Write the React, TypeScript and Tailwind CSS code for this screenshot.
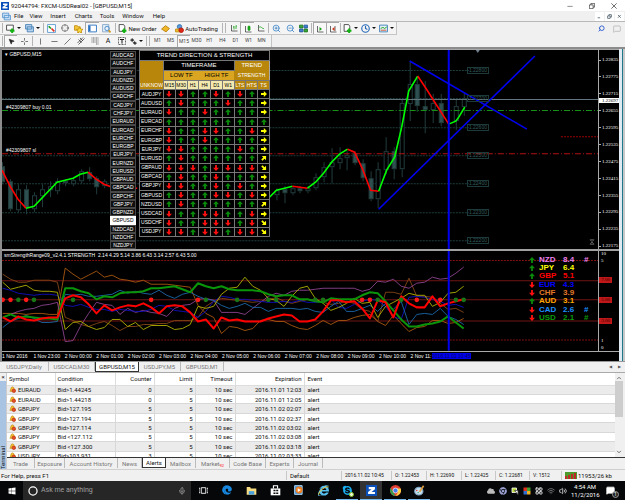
import type { ReactNode } from "react";
import clsx from "clsx";
import { FaChrome, FaCloud, FaEdge, FaInternetExplorer, FaSkype, FaWindows } from "react-icons/fa";
import {
  Clock, Crosshair, LayoutGrid, MessageSquare, Mic, MousePointer2, Search, Volume2, Wifi, ZoomIn, ZoomOut,
} from "lucide-react";

const PAIRS = [
  "AUDCAD", "AUDCHF", "AUDJPY", "AUDNZD", "AUDUSD", "CADCHF", "CADJPY", "CHFJPY", "EURAUD", "EURCAD", "EURCHF", "EURGBP",
  "EURJPY", "EURNZD", "EURUSD", "GBPAUD", "GBPCAD", "GBPCHF", "GBPJPY", "GBPNZD", "GBPUSD", "NZDCAD", "NZDCHF", "NZDJPY",
];

// u = up, d = down, last letter: r = flat, x = rising, y = falling
const TRENDS: [string, string][] = [
  ["AUDJPY", "dduududur"],
  ["AUDUSD", "uduuuduur"],
  ["EURAUD", "duuduuuur"],
  ["EURCAD", "uuuuuuuuu"],
  ["EURCHF", "duudduudr"],
  ["EURGBP", "duuduuuur"],
  ["EURJPY", "dduuuudur"],
  ["EURUSD", "uduuuuuux"],
  ["GBPAUD", "dddudddd" + "y"],
  ["GBPCAD", "uduuduuur"],
  ["GBPJPY", "dduududur"],
  ["GBPUSD", "uduuddudr"],
  ["NZDUSD", "uduuuuuux"],
  ["USDCAD", "duudduudr"],
  ["USDCHF", "duuddd" + "udy"],
  ["USDJPY", "ddudduddy"],
];

const PRICES = [
  "1.22835", "1.22775", "1.22715", "1.22655", "1.22595", "1.22535", "1.22475", "1.22415", "1.22355", "1.22295", "1.22235", "1.22175",
];

const LEVELS: [string, number][] = [
  ["1.22800", 20], ["1.22700", 48], ["1.22600", 77], ["1.22500", 105], ["1.22400", 133], ["1.22300", 162], ["1.22200", 190],
];

// x, wick top, body top, body bottom, wick bottom, filled
const CANDLES: [number, number, number, number, number, number][] = [
  [0, 112, 116, 132, 134, 1], [8, 129, 131, 159, 161, 1], [16, 134, 139, 160, 162, 0], [24, 135, 139, 158, 164, 1],
  [32, 142, 145, 159, 162, 0], [40, 134, 139, 146, 157, 0], [48, 131, 136, 140, 147, 0], [55, 128, 131, 141, 144, 0],
  [63, 129, 131, 133, 136, 1], [71, 127, 130, 134, 136, 0], [79, 119, 121, 131, 133, 0], [87, 117, 122, 129, 131, 1],
  [94, 126, 128, 137, 144, 1], [102, 129, 131, 136, 138, 0], [274, 138, 140, 145, 150, 0], [282, 136, 139, 143, 153, 1],
  [290, 136, 138, 143, 145, 0], [297, 136, 138, 141, 143, 1], [305, 136, 138, 141, 143, 0], [313, 123, 127, 138, 140, 0],
  [321, 112, 117, 127, 132, 0], [329, 98, 112, 117, 133, 0], [337, 97, 108, 113, 119, 0], [344, 101, 105, 108, 120, 0],
  [352, 101, 103, 113, 115, 1], [360, 109, 113, 128, 131, 1], [368, 121, 128, 149, 151, 1], [375, 112, 119, 149, 158, 0],
  [383, 87, 101, 120, 124, 0], [391, 97, 101, 119, 129, 1], [399, 50, 53, 119, 127, 0], [407, 11, 34, 54, 71, 0],
  [414, 26, 34, 56, 62, 1], [422, 31, 56, 60, 83, 1], [430, 44, 53, 60, 73, 0], [438, 44, 53, 73, 76, 1],
  [453, 49, 56, 71, 80, 0], [461, 42, 48, 57, 66, 0],
];

const AVERAGE: [string, string][] = [
  ["#f00", "2,120 10,136 18,149 26,158"],
  ["#0f0", "26,158 34,156 57,132 65,130 73,128 80,124 88,122"],
  ["#f00", "88,122 96,129 104,134 112,137 137,138"],
  ["#0f0", "268,148 276,140 284,138 292,136"],
  ["#f00", "292,136 307,138"],
  ["#0f0", "307,138 315,132 323,123 331,112 339,104 347,99"],
  ["#f00", "347,99 354,102 362,119 370,140 378,141"],
  ["#0f0", "378,141 386,120 394,107 401,77 408,41 417,26"],
  ["#f00", "417,26 425,38 448,74"],
  ["#0f0", "448,74 455,71 458,67 464,57"],
];

const STRENGTH: { color: string; width: number; points: number[] }[] = [
  { color: "#a8580e", width: 0.9, points: [62, 62, 62, 63, 62, 62, 63, 63, 17, 23, 28, 24, 20, 26, 24, 28, 29, 31, 29, 33, 33, 33, 34, 35, 36, 54, 62, 66, 82, 75, 76, 79, 77, 69, 68, 70, 70, 74, 77, 78, 74, 69, 73, 69, 69, 66, 64, 63, 70, 74, 64, 72, 80, 76, 75, 69, 69, 72, 71, 67] },
  { color: "#854616", width: 0.9, points: [23, 28, 31, 31, 29, 29, 29, 31, 66, 69, 73, 75, 72, 70, 74, 79, 75, 75, 73, 73, 72, 72, 69, 69, 69, 66, 55, 50, 47, 48, 49, 50, 51, 50, 49, 46, 50, 52, 50, 48, 49, 51, 53, 52, 50, 52, 58, 60, 70, 41, 41, 43, 27, 45, 45, 46, 52, 58, 57, 61] },
  { color: "#8c428e", width: 0.9, points: [66, 63, 60, 58, 57, 54, 53, 51, 90, 89, 74, 62, 51, 53, 54, 63, 57, 61, 59, 61, 62, 65, 57, 54, 53, 48, 47, 49, 61, 61, 61, 63, 57, 51, 45, 42, 44, 40, 39, 39, 38, 37, 37, 37, 37, 37, 40, 38, 30, 31, 28, 35, 37, 32, 31, 26, 28, 27, 22, 16] },
  { color: "#1010c0", width: 0.9, points: [37, 39, 42, 43, 44, 43, 43, 44, 54, 55, 53, 56, 58, 58, 60, 58, 59, 60, 60, 58, 54, 55, 59, 60, 61, 66, 60, 50, 45, 46, 48, 48, 49, 50, 51, 51, 50, 51, 49, 51, 51, 50, 48, 56, 57, 53, 50, 48, 49, 55, 65, 68, 46, 45, 46, 48, 50, 54, 53, 56] },
  { color: "#1b68a8", width: 0.9, points: [76, 70, 67, 64, 67, 71, 71, 70, 43, 44, 43, 45, 45, 44, 43, 39, 42, 40, 42, 43, 39, 44, 47, 43, 41, 45, 48, 49, 54, 57, 55, 52, 56, 56, 60, 57, 57, 57, 58, 57, 60, 61, 55, 50, 60, 60, 57, 54, 60, 52, 58, 50, 73, 63, 62, 63, 57, 65, 68, 73] },
  { color: "#b0b000", width: 0.9, points: [31, 38, 36, 34, 39, 40, 40, 41, 78, 71, 70, 75, 78, 76, 68, 68, 75, 71, 78, 74, 74, 74, 78, 77, 73, 55, 57, 55, 43, 37, 36, 26, 35, 39, 47, 49, 55, 45, 37, 35, 47, 52, 59, 56, 52, 47, 52, 51, 66, 55, 51, 47, 42, 44, 44, 55, 51, 42, 41, 35] },
  { color: "#0a940a", width: 2, points: [66, 63, 66, 65, 66, 67, 67, 68, 37, 37, 40, 42, 48, 45, 46, 42, 41, 41, 40, 37, 37, 36, 35, 38, 41, 32, 35, 37, 35, 38, 39, 39, 39, 40, 43, 45, 44, 44, 48, 48, 50, 51, 47, 48, 48, 48, 44, 41, 42, 50, 59, 68, 75, 75, 73, 72, 70, 65, 71, 77] },
  { color: "#f00", width: 2, points: [66, 70, 65, 68, 69, 67, 66, 66, 47, 44, 46, 53, 62, 54, 59, 56, 54, 55, 52, 56, 62, 55, 54, 55, 61, 70, 68, 77, 66, 69, 68, 70, 70, 70, 67, 65, 63, 64, 70, 70, 68, 60, 49, 49, 51, 50, 57, 67, 49, 51, 66, 45, 52, 56, 56, 45, 55, 52, 50, 48] },
];

const RED_DOTS = [0, 1, 3, 19, 25, 46, 47, 53, 56];
const GREEN_DOTS = [2, 4, 9, 26, 30, 34, 35, 40, 41, 48, 51, 58, 59];

const RANKING = [
  { name: "NZD", value: "8.4", up: true, mark: "#", color: "text-[#ee82ee]" },
  { name: "JPY", value: "6.4", up: true, mark: "", color: "text-[#ffff00]" },
  { name: "GBP", value: "5.1", up: true, mark: "", color: "text-[#ff0000]" },
  { name: "EUR", value: "4.3", up: false, mark: "", color: "text-[#0000ff]" },
  { name: "CHF", value: "3.9", up: false, mark: "", color: "text-[#e07828]" },
  { name: "AUD", value: "3.1", up: true, mark: "", color: "text-[#ffa500]" },
  { name: "CAD", value: "2.6", up: false, mark: "#", color: "text-[#1e90ff]" },
  { name: "USD", value: "2.1", up: false, mark: "#", color: "text-[#0a9a0a]" },
];

const TIMES = [
  "1 Nov 2016", "1 Nov 23:00", "2 Nov 00:00", "2 Nov 01:00", "2 Nov 02:00", "2 Nov 03:00", "2 Nov 04:00",
  "2 Nov 05:00", "2 Nov 06:00", "2 Nov 07:00", "2 Nov 08:00", "2 Nov 09:00", "2 Nov 10:00", "2 Nov 11:",
];

const ALERTS = [
  ["EURAUD", "Bid>1.44245", "0", "2016.11.01 12:03"],
  ["EURAUD", "Bid>1.44218", "0", "2016.11.01 12:05"],
  ["GBPJPY", "Bid>127.195", "5", "2016.11.02 02:07"],
  ["GBPJPY", "Bid>127.194", "5", "2016.11.02 02:37"],
  ["GBPJPY", "Bid>127.114", "5", "2016.11.02 03:02"],
  ["GBPJPY", "Bid <127.112", "5", "2016.11.02 03:08"],
  ["GBPJPY", "Bid <127.300", "5", "2016.11.02 03:18"],
  ["USDJPY", "Bid>103.931", "3", "2016.11.02 03:33"],
];

function Arrow({ dir }: { dir: string }) {
  const turn: Record<string, string> = { u: "0", d: "180", r: "90", x: "45", y: "135" };
  const fill = dir === "u" ? "#0a8a0a" : dir === "d" ? "#ff1010" : "#ffff00";
  return (
    <svg viewBox="0 0 8 8" className="mx-auto block size-[6px]">
      <path d="M4 0 8 4.2H5.2V8H2.8V4.2H0z" fill={fill} transform={`rotate(${turn[dir]} 4 4)`} />
    </svg>
  );
}

function Caret() {
  return (
    <svg viewBox="0 0 4 2" className="h-[2px] w-[4px] shrink-0">
      <path d="M0 0h4L2 2z" fill="#111" />
    </svg>
  );
}

function Draw({ children, className = "size-[9px]" }: { children: ReactNode; className?: string }) {
  return (
    <svg viewBox="0 0 16 16" fill="none" stroke="#444" strokeWidth="1.6" className={clsx("shrink-0", className)}>
      {children}
    </svg>
  );
}

function Tool({ label, className, children, pressed }: { label: string; className: string; children: ReactNode; pressed?: boolean }) {
  return (
    <button
      aria-label={label}
      className={clsx(
        "flex h-[12px] shrink-0 items-center justify-center whitespace-nowrap",
        pressed && "border-l border-t border-[#a8a8a8] bg-[#f8f8f8]",
        className,
      )}
    >
      {children}
    </button>
  );
}

function Sep() {
  return <span className="mx-[1px] h-[10px] w-px shrink-0 bg-[#b4b4b4]" />;
}

function Logo({ className }: { className: string }) {
  return (
    <svg viewBox="0 0 16 16" className={clsx("shrink-0", className)}>
      <path d="M0 0h16v16H0z" fill="#0a50b8" />
      <path d="M4 3h9v3L8 10h5v3H3v-3l5-4H4z" fill="#fff" />
    </svg>
  );
}

function Plus() {
  return <path d="M11 8v8M7 12h8" stroke="#12b012" strokeWidth="3.5" />;
}

function TitleBar() {
  return (
    <header className="flex h-[11px] items-center bg-white pl-[1px] pr-[8px]">
      <Logo className="size-[8px]" />
      <h1 className="ml-[2px] flex-1 whitespace-nowrap text-[6px] leading-[10px]">92044794: FXCM-USDReal02 - [GBPUSD,M15]</h1>
      <div className="flex gap-[16px]">
        <button aria-label="Minimize"><Draw className="size-[6px]"><path d="M1 9h14" /></Draw></button>
        <button aria-label="Restore"><Draw className="size-[6px]"><path d="M1 5h10v10H1zM5 5V1h10v10h-4" stroke="#111" /></Draw></button>
        <button aria-label="Close"><Draw className="size-[6px]"><path d="m1 1 14 14M15 1 1 15" stroke="#111" /></Draw></button>
      </div>
    </header>
  );
}

function MenuBar() {
  return (
    <nav className="flex h-[11px] items-center border-b border-[#b8b8b8] pl-[2px] text-[6px] leading-[10px]">
      <Draw><path d="M1 2h11v8H1zM4 6h11v8H4z" fill="#cfe4f8" stroke="#5a98d0" /></Draw>
      <div className="ml-[3px] flex flex-1">
        <button className="w-[15px] text-left">File</button>
        <button className="w-[14px]">View</button>
        <button className="w-[30px]">Insert</button>
        <button className="w-[21px]">Charts</button>
        <button className="w-[26px]">Tools</button>
        <button className="w-[26px]">Window</button>
        <button className="w-[26px]">Help</button>
      </div>
      <div className="flex gap-[1px] pr-[1px]">
        {["M2 12h8", "M2 6h8v8H2zM6 6V2h8v8h-4", "m3 3 9 9M12 3l-9 9"].map((d) => (
          <button key={d} aria-label="Chart window" className="flex h-[9px] w-[9px] items-center justify-center bg-white">
            <Draw className="size-[5px]"><path d={d} stroke="#456" strokeWidth="2.4" /></Draw>
          </button>
        ))}
      </div>
    </nav>
  );
}

function MainToolbar() {
  return (
    <div className="flex h-[13px] items-center">
      <div className="flex h-[13px] items-center border-b border-r border-[#c4c4c4] bg-[#f4f4f4] pl-[1px] text-[6px]">
        <Sep />
        <Tool label="New chart" className="w-[19px] gap-[2px]">
          <Draw><path d="M1 2h12v9H1z" fill="#fff" /><Plus /></Draw><Caret />
        </Tool>
        <Tool label="Profiles" className="w-[19px] gap-[2px]">
          <Draw><path d="M1 1h11v8H1zM4 5h11v9H4z" fill="#b8d4ee" stroke="#4b84b8" /></Draw><Caret />
        </Tool>
        <Sep />
        <Tool label="Market watch" className="w-[13px]">
          <Draw><path d="M1 1h14v14H1z" fill="#fff" stroke="#5a98d0" /><path d="m3 4 4 4" stroke="#18a018" strokeWidth="3" /><path d="m8 8 5 5" stroke="#e03020" strokeWidth="3" /></Draw>
        </Tool>
        <Tool label="Data window" className="w-[14px]"><Crosshair className="size-[8px] text-[#555]" /></Tool>
        <Tool label="Navigator" className="w-[13px]">
          <Draw><path d="M1 3h5l1 2h4v6H1z" fill="#f4c83c" stroke="#c89010" /><path d="m10 6 2 3 4 .5-3 2.5.5 4-3.500-2-3.500 2 .5-4L4 9.500 8.500 9z" fill="#fbe040" stroke="#c89010" /></Draw>
        </Tool>
        <Tool label="Terminal" className="w-[14px]" pressed>
          <Draw><path d="M1 2h14v12H1z" fill="#fff" stroke="#2870c0" /><path d="M3 3v10" stroke="#2870c0" strokeWidth="3" /></Draw>
        </Tool>
        <Tool label="Strategy tester" className="w-[15px]">
          <Draw><path d="M1 1h11v13H1z" fill="#e4eef8" stroke="#88a8c8" /><circle cx="9" cy="8" r="4" stroke="#4888c8" /><path d="m12 11 3 4" stroke="#d09820" strokeWidth="3" /></Draw>
        </Tool>
        <Sep />
        <Tool label="New order" className="w-[41px] gap-[1px]">
          <Draw><path d="M2 1h8l2 3v9H2z" fill="#fff" /><Plus /></Draw>New Order
        </Tool>
        <Tool label="MetaEditor" className="w-[14px]">
          <Draw><path d="m1 9 7-6 7 5-6 6z" fill="#f0b828" stroke="#b88010" /></Draw>
        </Tool>
        <Tool label="AutoTrading" className="w-[49px] gap-[1px]">
          <Draw><circle cx="8" cy="5" r="4" fill="#5898d8" stroke="#3878b8" /><path d="M1 9h12v5H1z" fill="#f0c030" stroke="#c08c10" /><circle cx="11" cy="11" r="4" fill="#e02818" stroke="#b01810" /></Draw>AutoTrading
        </Tool>
        <Sep />
        <Sep />
        <Tool label="Bar chart" className="w-[13px]">
          <Draw className="size-[8px]"><path d="M3 2v12h12" /><path d="M8 4v7M8 6H6M12 3v7M12 4h2" stroke="#18a018" /></Draw>
        </Tool>
        <Tool label="Candlesticks" className="w-[14px]" pressed>
          <Draw className="size-[8px]"><path d="M3 2v12h12" /><path d="M8 3h4v7H8zM10 1v11" fill="#18b018" stroke="#18a018" /></Draw>
        </Tool>
        <Tool label="Line chart" className="w-[13px]">
          <Draw className="size-[8px]"><path d="M3 2v12h12" /><path d="M3 8c5-6 6 2 11 1" stroke="#18a018" /></Draw>
        </Tool>
        <Sep />
        <Tool label="Zoom in" className="w-[13px]">
          <ZoomIn className="size-[9px] text-[#2f7cc4]" />
        </Tool>
        <Tool label="Zoom out" className="w-[14px]">
          <ZoomOut className="size-[9px] text-[#2f7cc4]" />
        </Tool>
        <Tool label="Tile windows" className="w-[13px]">
          <Draw><path d="M1 2h6v5H1zM9 9h6v5H9z" fill="#38a838" stroke="#207820" /><path d="M9 2h6v5H9zM1 9h6v5H1z" fill="#4080d0" stroke="#2858a0" /></Draw>
        </Tool>
        <Sep />
        <Tool label="Auto scroll" className="w-[13px]" pressed>
          <Draw className="size-[8px]"><path d="M3 2v12h12" /><path d="m7 4 5 4-5 4z" fill="#18a018" stroke="none" /></Draw>
        </Tool>
        <Tool label="Chart shift" className="w-[13px]" pressed>
          <Draw className="size-[8px]"><path d="M3 2v12h12M12 2v10" /><path d="m11 4-5 4 5 4z" fill="#d03818" stroke="none" /></Draw>
        </Tool>
        <Sep />
        <Tool label="Indicators" className="w-[17px] gap-[2px]">
          <Draw><path d="M2 1h8l2 3v9H2z" fill="#fff" /><Plus /></Draw><Caret />
        </Tool>
        <Tool label="Periods" className="w-[18px] gap-[2px]"><Clock strokeWidth={3} className="size-[9px] text-[#2468b8]" /><Caret /></Tool>
        <Tool label="Templates" className="w-[19px] gap-[2px]">
          <Draw><path d="M1 2h14v12H1z" fill="#e4f0fa" stroke="#4080b8" /><path d="m3 8 4-2 3 2 4-3" stroke="#18a018" /><path d="M3 11h10" stroke="#d05030" /></Draw><Caret />
        </Tool>
      </div>
      <div className="flex flex-1 justify-end gap-[8px] pr-[4px]">
        <button aria-label="Search"><Search strokeWidth={3} className="size-[7px] -scale-x-100 text-[#2858d0]" /></button>
        <button aria-label="Chat"><MessageSquare className="size-[8px] text-[#aaa]" /></button>
      </div>
    </div>
  );
}

function LineToolbar() {
  const periods = ["M1", "M5", "M15", "M30", "H1", "H4", "D1", "W1", "MN"];
  return (
    <div className="flex h-[12px] items-center">
      <div className="flex h-[12px] items-center border-r border-[#c4c4c4] bg-[#f4f4f4] pl-[1px]">
        <Sep />
        <Tool label="Cursor" className="w-[13px]" pressed><MousePointer2 className="size-[7px] fill-[#222] text-[#222]" /></Tool>
        <Tool label="Crosshair" className="w-[14px]"><Draw className="size-[7px]"><path d="M8 0v6M8 10v6M0 8h6M10 8h6" /></Draw></Tool>
        <Sep />
        <Tool label="Vertical line" className="w-[13px]"><Draw className="size-[7px]"><path d="M8 1v14" /></Draw></Tool>
        <Tool label="Horizontal line" className="w-[14px]"><Draw className="size-[7px]"><path d="M1 8h14" /></Draw></Tool>
        <Tool label="Trendline" className="w-[13px]"><Draw className="size-[7px]"><path d="M1 15 15 1" /></Draw></Tool>
        <Tool label="Channel" className="w-[14px]"><Draw className="size-[8px]"><path d="M1 12 12 1M3 15 15 3M3 5l6 6M6 2l6 6" /></Draw></Tool>
        <Tool label="Fibonacci" className="w-[13px]"><Draw className="size-[8px]"><path d="M1 2h14M1 6h14M1 10h14M10 14h5" strokeDasharray="2 1" /></Draw></Tool>
        <Tool label="Text" className="w-[14px] text-[7px]">A</Tool>
        <Tool label="Text label" className="w-[13px]"><Draw className="size-[8px]"><path d="M1 1h14v14H1z" strokeDasharray="2 1" /><path d="M4 5h8M8 5v8" stroke="#111" strokeWidth="2" /></Draw></Tool>
        <Tool label="Arrows" className="w-[17px] gap-[2px]"><Draw className="size-[7px]"><path d="m1 5 4-4 4 4-4 3zM7 11l4-3 4 4-4 3z" fill="#333" /></Draw><Caret /></Tool>
        <Sep />
        <Sep />
        {periods.map((p) => (
          <Tool key={p} label={p} className="w-[13px] text-[5px] text-[#444]" pressed={p === "M15"}>{p}</Tool>
        ))}
        <span className="w-[3px]" />
      </div>
    </div>
  );
}

function TrendTable() {
  const cell = "border border-[#777] p-0";
  return (
    <table className="h-[187px] w-[131px] table-fixed border-collapse border border-[#aaa] bg-black text-center text-[6px] leading-[7px] text-white">
      <colgroup>
        <col className="w-[24px]" />
      </colgroup>
      <thead>
        <tr className="h-[10px]"><th colSpan={10} className={clsx(cell, "whitespace-nowrap font-normal")}>TREND DIRECTION &amp; STRENGTH</th></tr>
        <tr className="h-[10px]">
          <th rowSpan={3} className="overflow-hidden border border-[#777] bg-[#b8860b] p-0 align-bottom text-[5px] font-normal">UNKNOW</th>
          <th colSpan={6} className={clsx(cell, "font-normal")}>TIMEFRAME</th>
          <th colSpan={3} className="bg-[#b8860b] p-0 font-normal">TREND</th>
        </tr>
        <tr className="h-[10px] text-black">
          <th colSpan={3} className="bg-[#daa520] p-0 font-normal">LOW TF</th>
          <th colSpan={3} className="bg-[#daa520] p-0 font-normal">HIGH TF</th>
          <th colSpan={3} className="bg-[#b8860b] p-0 text-[5px] font-normal text-white">STRENGTH</th>
        </tr>
        <tr className="h-[9px] text-[5px]">
          {["M15", "M30", "H1", "H4", "D1", "W1"].map((h) => (
            <th key={h} className={clsx(cell, "bg-[#f3e9ae] font-normal text-black")}>{h}</th>
          ))}
          {["LTS", "HTS", "TS"].map((h) => (
            <th key={h} className={clsx(cell, "bg-[#b8860b] font-normal")}>{h}</th>
          ))}
        </tr>
      </thead>
      <tbody>
        {TRENDS.map(([pair, dirs]) => (
          <tr key={pair} className="h-[9px]">
            <th scope="row" className={clsx(cell, "text-[5px] font-normal")}>{pair}</th>
            {dirs.split("").map((d, i) => (
              <td key={i} className={cell}><Arrow dir={d} /></td>
            ))}
          </tr>
        ))}
      </tbody>
    </table>
  );
}

function PriceChart() {
  return (
    <div className="flex min-h-[199px] flex-[2]">
      <div className="relative flex-1 overflow-hidden border-r border-[#aaa]">
        <svg viewBox="2 0 595 199" preserveAspectRatio="none" className="absolute inset-0 h-full w-full" fill="none">
          {LEVELS.map(([label, y]) => (
            <path key={label} d={`M2 ${y + 0.5}H468`} stroke="#1d3c3c" strokeDasharray="2 1" />
          ))}
          {CANDLES.map(([x, high, top, bottom, low, filled]) => (
            <g key={x} stroke="#223c3c">
              <path d={`M${x + 2.5} ${high}V${top}M${x + 2.5} ${bottom}V${low}`} />
              <rect x={x + 0.5} y={top + 0.5} width="4" height={bottom - top - 1} fill={filled ? "#2f5050" : "#000"} />
            </g>
          ))}
          <path d="M2 49.5H597" stroke="#64747c" />
          <path d="M2 60.5H597" stroke="#189018" strokeDasharray="6 2 1 2" />
          <path d="M2 103.5H597" stroke="#b01010" strokeDasharray="6 2 1 2" />
          <path d="M560 86.5H597" stroke="#900" strokeDasharray="2 1" />
          {AVERAGE.map(([color, points]) => (
            <polyline key={points} points={points} stroke={color} strokeWidth="1.6" />
          ))}
          <g stroke="#0000f0" strokeWidth="1.6">
            <path d="M409 11 526 79M378 159 534 6" />
            <path d="M448 0V199" strokeWidth="2" />
          </g>
          <path d="M475 0h4l-2 3z" fill="#708090" />
        </svg>
        {LEVELS.map(([label, y]) => (
          <span
            key={label}
            style={{ top: `${((y - 3) / 199) * 100}%` }}
            className="absolute left-[78%] border border-[#1d3a3a] px-[1px] text-[5px] leading-[5px] text-[#345c5c]"
          >
            {label}
          </span>
        ))}
        <p className="absolute left-[3px] top-[1px] text-[5px] leading-[6px]">▾ GBPUSD,M15</p>
        <p className="absolute left-[4px] top-[54px] text-[5px] leading-[6px]">#42309807 buy 0.01</p>
        <p className="absolute left-[4px] top-[97px] text-[5px] leading-[6px]">#42309807 sl</p>
        <div className="absolute inset-y-0 left-[108px] flex w-[26px] flex-col pt-[1px]">
          {PAIRS.map((pair) => (
            <button
              key={pair}
              className={clsx(
                "min-h-0 flex-1 border text-[5px] leading-[6px]",
                pair === "GBPUSD" ? "border-white bg-white text-black" : "border-[#484848] bg-[#101010]",
              )}
            >
              {pair}
            </button>
          ))}
        </div>
        <div className="absolute left-[137px] top-0"><TrendTable /></div>
        <Draw className="absolute bottom-[4px] right-[3px] size-[6px]"><path d="M3 2h10L8 7zM3 14h10L8 8z" stroke="#999" /></Draw>
      </div>
      <div className="relative flex w-[20px] flex-col justify-between pt-[7px] font-['Liberation_Serif',serif] text-[5px] leading-[6px]">
        {PRICES.map((p) => (
          <span key={p} className="flex items-center gap-[1px]"><i className="h-px w-[2px] bg-[#aaa]" />{p}</span>
        ))}
        <span className="absolute left-0 top-[24%] w-full bg-white pl-[3px] leading-[5px] text-black">1.22697</span>
      </div>
    </div>
  );
}

function StrengthChart() {
  const x = (i: number) => 2.7 + i * 7.8;
  const marks = [["7.00", "26%"], ["5.00", "46%"], ["3.00", "67%"]];
  return (
    <div className="flex min-h-[99px] flex-1 border-b border-[#aaa]">
      <div className="relative flex-1 overflow-hidden border-r border-[#aaa]">
        <svg viewBox="2 0 595 99" preserveAspectRatio="none" className="absolute inset-0 h-full w-full" fill="none">
          <path d="M2 9.500H597M2 88.500H597" stroke="#801010" strokeDasharray="2 1" />
          <path d="M2 29.500H597M2 48.500H597M2 69.500H597" stroke="#701414" />
          {STRENGTH.map((s) => (
            <polyline
              key={s.color}
              points={s.points.map((y, i) => `${x(i)},${y}`).join(" ")}
              stroke={s.color}
              strokeWidth={s.width}
              strokeLinejoin="round"
            />
          ))}
          {RED_DOTS.map((i) => <circle key={i} cx={x(i)} cy="48.500" r="2.300" fill="#ff1818" />)}
          {GREEN_DOTS.map((i) => <circle key={i} cx={x(i)} cy="48.500" r="2.300" fill="#187818" />)}
          <path d="M448 0V99" stroke="#0000f0" strokeWidth="2" />
        </svg>
        <p className="absolute left-[2px] top-[1px] whitespace-pre text-[5px] leading-[6px]">
          smStrengthRange09_v2.4.1 STRENGTH  2.14 4.29 5.14 3.86 6.43 3.14 2.57 6.43 5.00
        </p>
        <ul className="absolute right-[6px] top-[4px] grid h-[67px] w-[63px] grid-rows-8 text-[8px] font-bold leading-[8px]">
          {RANKING.map((r) => (
            <li key={r.name} className={clsx("flex items-center", r.color)}>
              <span className="w-[6px]"><Arrow dir={r.up ? "u" : "d"} /></span>
              <span className="ml-[4px] w-[24px]">{r.name}</span>
              <span className="w-[21px]">{r.value}</span>
              <span>{r.mark}</span>
            </li>
          ))}
        </ul>
      </div>
      <div className="relative w-[20px] font-['Liberation_Serif',serif] text-[5px] leading-[6px]">
        <span className="absolute left-[2px] top-0">10</span>
        <span className="absolute left-[2px] top-[7%]">5</span>
        {marks.map(([label, top]) => (
          <span key={label} style={{ top }} className="absolute left-0 w-[13px] bg-[#c01818] text-center text-[#300]">{label}</span>
        ))}
        <span className="absolute bottom-[7%] left-[2px]">1</span>
        <span className="absolute bottom-0 left-[2px]">0</span>
      </div>
    </div>
  );
}

function TimeAxis() {
  return (
    <div className="flex h-[9px] pt-[1px]">
      <div className="relative grid flex-1 grid-cols-19 text-[5px] leading-[6px]">
        {TIMES.map((t) => (
          <span key={t} className="whitespace-nowrap">{t}</span>
        ))}
        <span className="absolute left-[72%] w-[39px] whitespace-nowrap bg-[#0000f0] text-center text-[#000060]">2016.11.02 10:45</span>
      </div>
      <div className="w-[20px]" />
    </div>
  );
}

function ChartTabs() {
  const tabs = [
    ["USDJPY,Daily", "w-[49px]"], ["USDCAD,M30", "w-[46px]"], ["GBPUSD,M15", "w-[44px]"], ["USDJPY,M5", "w-[42px]"], ["GBPUSD,M1", "w-[43px]"],
  ];
  return (
    <div className="flex h-[11px] items-start border-t border-[#999] text-[6px] leading-[9px]">
      {tabs.map(([tab, width]) => (
        <button
          key={tab}
          className={clsx(width, "whitespace-nowrap text-center", tab === "GBPUSD,M15" ? "border-x border-b border-[#333] bg-white" : "border-r border-[#bbb] text-[#777]")}
        >
          {tab}
        </button>
      ))}
      <div className="flex flex-1 justify-end gap-[6px] pr-[4px] text-[#555]">
        <button aria-label="Scroll left" className="text-[4px]">◀</button>
        <button aria-label="Scroll right" className="text-[4px]">▶</button>
      </div>
    </div>
  );
}

function Terminal() {
  const tabs = [
    ["Trade", "w-[28px]"], ["Exposure", "w-[30px]"], ["Account History", "w-[53px]"], ["News", "w-[24px]"], ["Alerts", "w-[24px]"],
    ["Mailbox", "w-[30px]"], ["Market", "w-[34px]"], ["Code Base", "w-[36px]"], ["Experts", "w-[28px]"], ["Journal", "w-[29px]"],
  ];
  const head = "border-r border-[#ddd] px-[2px] py-0 font-normal";
  const cell = "border-r border-[#d8d8d8] px-[2px] py-0";
  return (
    <section className="flex border-t border-[#aaa]">
      <div className="flex w-[7px] flex-col items-center justify-between border-r border-[#ccc] bg-[#a9c4e2]">
        <button aria-label="Close terminal" className="w-full bg-[#f0f0f0] text-[6px] leading-[8px]">×</button>
        <span className="rotate-180 text-[6px] leading-[6px] [writing-mode:vertical-rl]">Terminal</span>
      </div>
      <div className="min-w-0 flex-1">
        <div className="flex h-[85px] border-b border-[#333] bg-white">
          <div className="flex-1 overflow-hidden">
            <table className="h-[88px] w-full table-fixed border-collapse whitespace-nowrap text-[6px] leading-[7px]">
              <colgroup>
                <col className="w-[48px]" />
                <col className="w-[60px]" />
                <col className="w-[39px]" />
                <col className="w-[41px]" />
                <col className="w-[40px]" />
                <col className="w-[69px]" />
                <col />
              </colgroup>
              <thead>
                <tr className="h-[12px] border-b border-[#ddd]">
                  <th className={clsx(head, "text-left")}>Symbol</th>
                  <th className={clsx(head, "text-left")}>Condition</th>
                  <th className={clsx(head, "text-right")}>Counter</th>
                  <th className={clsx(head, "text-right")}>Limit</th>
                  <th className={clsx(head, "text-right")}>Timeout</th>
                  <th className={clsx(head, "text-right")}>Expiration</th>
                  <th className="px-[3px] py-0 text-left font-normal">Event</th>
                </tr>
              </thead>
              <tbody>
                {ALERTS.map(([symbol, condition, counter, expiration]) => (
                  <tr key={expiration} className="border-b border-[#d8d8d8] odd:bg-[#ebebeb]">
                    <td className={cell}>
                      <span className="flex items-center gap-[2px]">
                        <Draw className="size-[7px]"><path d="M2 12c3-2 1-10 6-10s3 8 6 10z" fill="#f4c030" stroke="#c08810" /><circle cx="11" cy="11" r="4" fill="#e05028" stroke="#c03010" /></Draw>
                        {symbol}
                      </span>
                    </td>
                    <td className={cell}>{condition}</td>
                    <td className={clsx(cell, "text-right")}>{counter}</td>
                    <td className={clsx(cell, "text-right")}>5</td>
                    <td className={clsx(cell, "text-right")}>10 sec</td>
                    <td className={clsx(cell, "text-right")}>{expiration}</td>
                    <td className="px-[3px] py-0">alert</td>
                  </tr>
                ))}
              </tbody>
            </table>
          </div>
          <div className="flex w-[8px] flex-col items-center bg-[#f0f0f0] py-[2px]">
            <Draw className="size-[6px]"><path d="m3 11 5-5 5 5" strokeWidth="2" /></Draw>
            <span className="h-[36px] w-full bg-[#cdcdcd]" />
            <span className="flex-1" />
            <Draw className="size-[6px]"><path d="m3 5 5 5 5-5" strokeWidth="2" /></Draw>
          </div>
          <span className="w-[2px] bg-[#f0f0f0]" />
        </div>
        <div className="flex h-[11px] text-[6px] leading-[9px]">
          {tabs.map(([tab, width]) => (
            <button
              key={tab}
              className={clsx(width, "h-[10px] whitespace-nowrap text-center", tab === "Alerts" ? "border-x border-b border-[#333] bg-white" : "border-r border-[#bbb] text-[#777]")}
            >
              {tab}
              {tab === "Market" && <sub className="text-[4px] text-[#f00]">92</sub>}
            </button>
          ))}
        </div>
      </div>
    </section>
  );
}

function StatusBar() {
  const cell = "border-l border-[#c8c8c8] pl-[3px] whitespace-nowrap";
  return (
    <footer className="flex h-[12px] items-center border-t border-[#d0d0d0] pl-[1px] text-[6px] leading-[9px]">
      <span className="flex-1">For Help, press F1</span>
      <span className={clsx(cell, "w-[55px]")}>Default</span>
      <span className={clsx(cell, "w-[50px] text-[5px]")}>2016.11.02 10:45</span>
      <span className={clsx(cell, "w-[35px] text-[5px]")}>O: 1.22453</span>
      <span className={clsx(cell, "w-[35px] text-[5px]")}>H: 1.22690</span>
      <span className={clsx(cell, "w-[34px] text-[5px]")}>L: 1.22425</span>
      <span className={clsx(cell, "w-[34px] text-[5px]")}>C: 1.22681</span>
      <span className={clsx(cell, "w-[32px] text-[5px]")}>V: 1512</span>
      <span className={clsx(cell, "flex w-[64px] items-center gap-[1px]")}>
        <svg viewBox="0 0 12 7" className="h-[7px] w-[12px]">
          <path d="M0 0h12v7H0z" fill="#4c9a2c" />
          <path d="M0 4h2v3H0zM3 3h2v4H3zM6 2h2v5H6zM9 1h2v6H9z" fill="#c02828" />
        </svg>
        11953/26 kb
      </span>
    </footer>
  );
}

function TaskButton({ label, children, running, active }: { label: string; children: ReactNode; running?: boolean; active?: boolean }) {
  return (
    <button
      aria-label={label}
      className={clsx(
        "mx-[1px] flex h-full w-[22px] items-center justify-center border-b",
        running ? "border-[#76b9ed]" : "border-transparent",
        active && "bg-[#333]",
      )}
    >
      {children}
    </button>
  );
}

function Taskbar() {
  return (
    <div className="flex h-[19px] items-center bg-[#050709] text-white">
      <button aria-label="Start" className="flex w-[23px] justify-center"><FaWindows className="size-[8px]" /></button>
      <label className="flex h-full w-[168px] items-center gap-[3px] bg-[#262626] px-[5px]">
        <Draw className="size-[10px]"><circle cx="8" cy="8" r="6.500" stroke="#fff" strokeWidth="2" /></Draw>
        <input aria-label="Search" placeholder="Ask me anything" className="min-w-0 flex-1 bg-transparent text-[7px] leading-[9px] outline-none placeholder:text-[#a0a0a0]" />
        <Mic className="size-[8px] text-[#aaa]" />
      </label>
      <div className="flex h-full">
        <TaskButton label="Task view">
          <Draw><path d="M4 3h8v10H4zM2 4H0v8h2M14 4h2v8h-2" stroke="#fff" /></Draw>
        </TaskButton>
        <TaskButton label="Edge"><FaEdge className="size-[10px] text-[#1888e0]" /></TaskButton>
        <TaskButton label="File Explorer">
          <Draw className="size-[11px]"><path d="M1 3h5l1 2h8v9H1z" fill="#f8dc80" stroke="none" /><path d="M4 9h8v5H4z" fill="#48a0e0" stroke="none" /></Draw>
        </TaskButton>
        <TaskButton label="Store">
          <Draw className="size-[11px]"><path d="M1 5h14v10H1z" fill="#fff" stroke="none" /><path d="M5 5V1h6v4" stroke="#fff" /><path d="M5 7h3v2H5zM9 7h3v2H9zM5 11h3v2H5zM9 11h3v2H9z" fill="#111" stroke="none" /></Draw>
        </TaskButton>
        <TaskButton label="Media Player">
          <Draw className="size-[10px]"><path d="M1 1h12v14H1z" fill="#4890d0" stroke="#a8d0f0" /><circle cx="8" cy="8" r="5.500" fill="#f08020" stroke="none" /><path d="m6 5 5 3-5 3z" fill="#fff" stroke="none" /></Draw>
        </TaskButton>
        <TaskButton label="Internet Explorer">
          <span className="relative">
            <FaInternetExplorer className="size-[11px] text-[#58c0f0]" />
            <svg viewBox="0 0 16 16" className="absolute inset-0 size-[11px]" fill="none">
              <path d="M1 14C1 9 11 1 15 3" stroke="#f4c830" strokeWidth="1.4" />
            </svg>
          </span>
        </TaskButton>
        <TaskButton label="Skype" running>
          <span className="relative">
            <FaSkype className="size-[11px] text-[#18aef0]" />
            <i className="absolute -bottom-[1px] -right-[1px] size-[5px] rounded-full border border-[#7cc020] bg-[#f0f8d8]" />
          </span>
        </TaskButton>
        <TaskButton label="Trading Station" running active><Logo className="size-[11px]" /></TaskButton>
        <TaskButton label="Chrome" running>
          <svg viewBox="0 0 16 16" className="size-[11px]">
            <circle cx="8" cy="8" r="8" fill="#e03c30" />
            <path d="M1 4.200 5 11l3 5a8 8 0 0 1-7-11.800" fill="#30a050" />
            <path d="M15.400 5H8l4 5-4 6a8 8 0 0 0 7.400-11" fill="#fcd040" />
            <circle cx="8" cy="8" r="3.600" fill="#4080f0" stroke="#fff" />
          </svg>
        </TaskButton>
        <TaskButton label="Paint" running>
          <Draw className="size-[11px]"><ellipse cx="7" cy="9" rx="6" ry="5.500" fill="#c8e0f0" stroke="#80a8c8" /><path d="m8 10 6-9" stroke="#e0a040" strokeWidth="2.400" /><circle cx="4" cy="8" r="1" fill="#e03020" stroke="none" /><circle cx="6" cy="11" r="1" fill="#20a040" stroke="none" /></Draw>
        </TaskButton>
      </div>
      <div className="flex flex-1 items-center justify-end gap-[4px] pr-[8px]">
        <FaCloud className="size-[8px] text-[#bbb]" />
        <FaChrome className="size-[8px] text-[#9aa0d0]" />
        <Draw className="size-[8px]"><path d="M2 2h9v9H2z" fill="#b8d838" stroke="#fff" /><path d="M7 7h7v8z" fill="#fff" /></Draw>
        <Draw className="size-[8px]"><path d="M1 1h7v7H1z" fill="#e03020" stroke="none" /><path d="M8 1h7v7H8z" fill="#40a030" stroke="none" /><path d="M1 8h7v7H1z" fill="#3070d0" stroke="none" /><path d="M8 8h7v7H8z" fill="#f0b020" stroke="none" /></Draw>
        <LayoutGrid strokeWidth={3} className="size-[8px] text-[#ddd]" />
        <Wifi className="size-[8px] text-[#999]" />
        <Volume2 className="size-[8px]" />
        <time className="w-[28px] text-center text-[6px] leading-[8px]">4:54 AM 11/2/2016</time>
        <span className="relative ml-[3px] mr-[2px]">
          <MessageSquare className="size-[9px] fill-white" />
          <span className="absolute -bottom-[3px] -right-[4px] size-[7px] rounded-full border border-[#999] bg-[#222] text-center text-[5px] leading-[5px]">1</span>
        </span>
      </div>
    </div>
  );
}

export default function App() {
  return (
    <div className="flex min-h-screen flex-col bg-[#f0f0f0] font-[Roboto,'Liberation_Sans',sans-serif] text-[#111]">
      <TitleBar />
      <MenuBar />
      <MainToolbar />
      <LineToolbar />
      <main className="flex flex-1 border-l-2 border-t-2 border-[#8c8c8c] bg-black font-['Liberation_Sans',sans-serif] text-white">
        <div className="flex min-w-0 flex-1 flex-col border-t border-[#aaa]">
          <PriceChart />
          <div className="h-[2px] bg-[#a0a0a0]" />
          <StrengthChart />
          <TimeAxis />
        </div>
        <div className="w-[4px] border-r border-[#20788c] bg-[#dfe9f2]" />
        <div className="w-[2px] bg-[#c8c8c8]" />
      </main>
      <ChartTabs />
      <Terminal />
      <StatusBar />
      <Taskbar />
    </div>
  );
}
